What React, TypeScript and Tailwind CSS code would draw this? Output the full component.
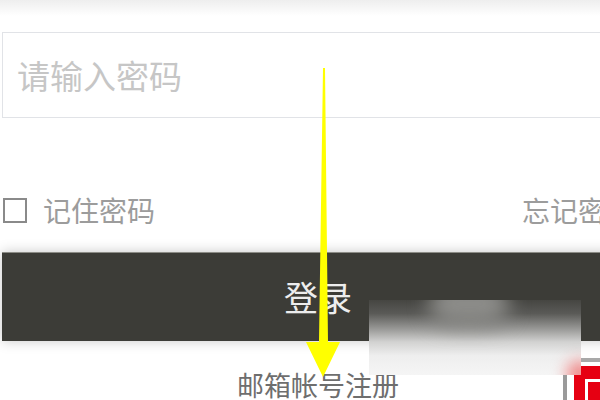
import React from "react";

const cjk = { fontFamily: '"Noto Sans CJK SC", "Noto Sans", sans-serif' };

function Arrow() {
  return (
    <svg
      className="pointer-events-none absolute left-0 top-0"
      width="600"
      height="400"
      viewBox="0 0 600 400"
    >
      <polygon
        points="323,68 325,68 328,342 340,342 323,377 306,342 319,342"
        fill="#ffff00"
      />
    </svg>
  );
}

function BadgeCorner() {
  return (
    <div className="absolute left-[563px] top-[358px] flex h-[42px] w-[37px]">
      <div className="mt-[14px] h-full w-[4px] bg-[#9a9a9a]" />
      <div className="ml-[7px] flex flex-1 flex-col">
        <div className="ml-[6px] h-[4px] bg-[#a8a8a8]" />
        <div className="mt-[4px] flex-1 bg-[#e60012] pl-[11px] pt-[13px]">
          <div className="h-full w-full border-l-[3px] border-t-[3px] border-white" />
        </div>
      </div>
    </div>
  );
}

// Blurred mask laid over the lower right of the login button
function BlurMask() {
  return (
    <div className="absolute left-[369px] top-[300px] h-[75px] w-[212px] overflow-hidden bg-[linear-gradient(to_bottom,#464642_0%,#5a5a57_18%,#979795_38%,#d2d2d1_56%,#eeeeee_74%,#f5f5f5_100%)]">
      <div className="absolute left-[60px] top-[-18px] h-[44px] w-[80px] rounded-full bg-[#8c8c89] blur-[10px]" />
      <div className="absolute right-[-12px] bottom-[-12px] h-[26px] w-[26px] rounded-full bg-[#ee7c7c] blur-[8px]" />
    </div>
  );
}

export default function App() {
  return (
    <div
      className="relative h-[400px] w-[600px] overflow-hidden bg-white"
      style={cjk}
    >
      <div className="h-[16px] bg-gradient-to-b from-[#eeeeee] to-white" />
      <div className="ml-[2px] flex w-[632px] flex-col">
        <div className="mt-[16px] flex h-[86px] items-center border border-[#e1e3e7] pl-[14px] text-[33px] leading-none text-[#c6c6c6]">
          请输入密码
        </div>
        <div className="mt-[78px] flex h-[28px] items-center justify-between">
          <div className="flex items-center">
            <div className="ml-[1px] h-[25px] w-[24px] border-2 border-[#8a8a8a]" />
            <span className="ml-[16px] text-[28px] leading-none text-[#9c9c9c]">
              记住密码
            </span>
          </div>
          <span className="text-[28px] leading-none text-[#9c9c9c]">忘记密码</span>
        </div>
        <div className="mt-[28px] flex h-[89px] items-center justify-center border-t border-[#8c8c86] bg-[#3c3c37] shadow-[0_0_12px_rgba(0,0,0,0.22)]">
          <span className="text-[34px] leading-none text-[#ededed]">登录</span>
        </div>
        <div className="mt-[30px] text-center text-[27px] leading-none text-[#6e6e6e]">
          邮箱帐号注册
        </div>
      </div>
      <BadgeCorner />
      <BlurMask />
      <Arrow />
    </div>
  );
}
